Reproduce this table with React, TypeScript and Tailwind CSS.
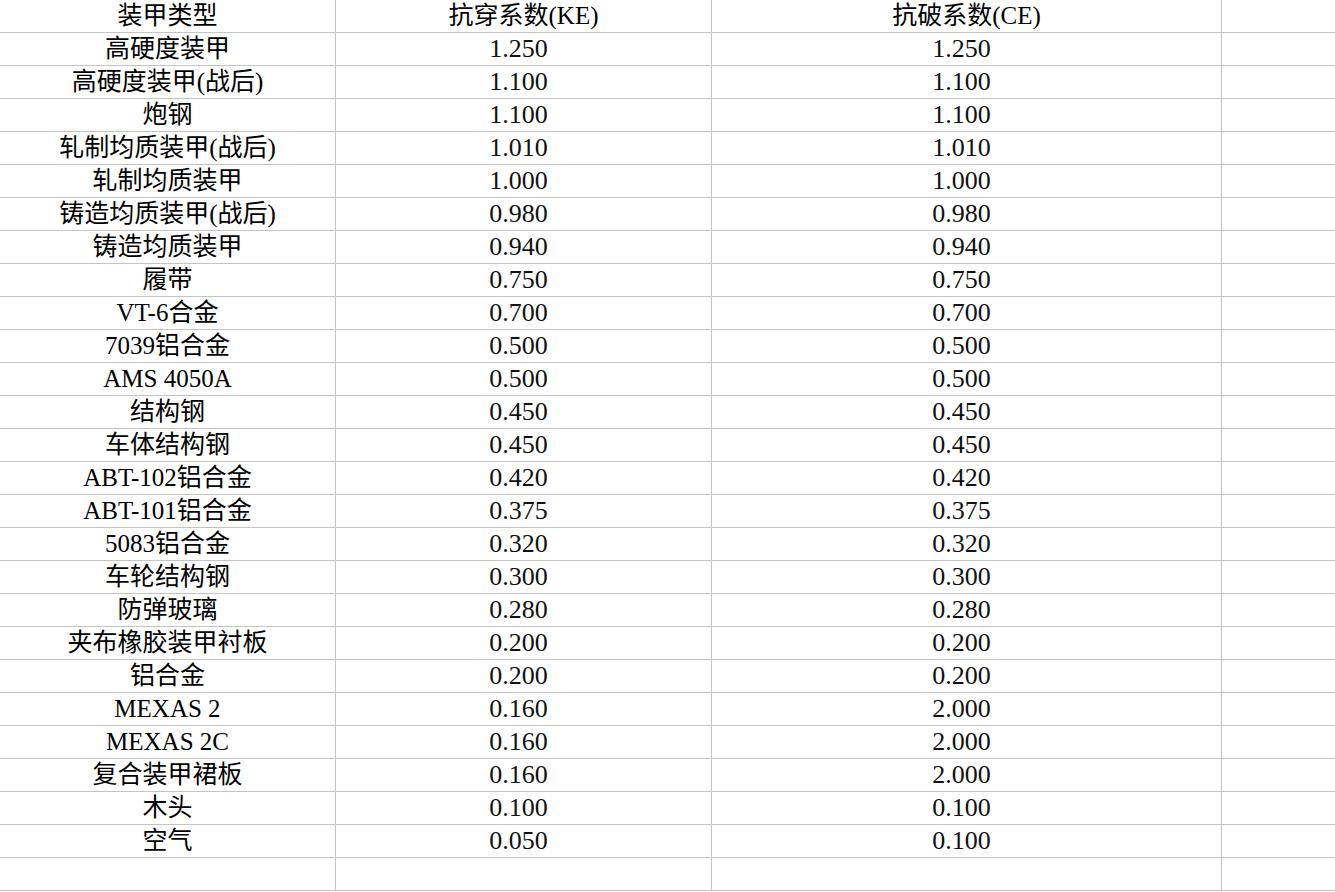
const rows: [string, string, string][] = [
  ["高硬度装甲", "1.250", "1.250"],
  ["高硬度装甲(战后)", "1.100", "1.100"],
  ["炮钢", "1.100", "1.100"],
  ["轧制均质装甲(战后)", "1.010", "1.010"],
  ["轧制均质装甲", "1.000", "1.000"],
  ["铸造均质装甲(战后)", "0.980", "0.980"],
  ["铸造均质装甲", "0.940", "0.940"],
  ["履带", "0.750", "0.750"],
  ["VT-6合金", "0.700", "0.700"],
  ["7039铝合金", "0.500", "0.500"],
  ["AMS 4050A", "0.500", "0.500"],
  ["结构钢", "0.450", "0.450"],
  ["车体结构钢", "0.450", "0.450"],
  ["ABT-102铝合金", "0.420", "0.420"],
  ["ABT-101铝合金", "0.375", "0.375"],
  ["5083铝合金", "0.320", "0.320"],
  ["车轮结构钢", "0.300", "0.300"],
  ["防弹玻璃", "0.280", "0.280"],
  ["夹布橡胶装甲衬板", "0.200", "0.200"],
  ["铝合金", "0.200", "0.200"],
  ["MEXAS 2", "0.160", "2.000"],
  ["MEXAS 2C", "0.160", "2.000"],
  ["复合装甲裙板", "0.160", "2.000"],
  ["木头", "0.100", "0.100"],
  ["空气", "0.050", "0.100"],
  ["", "", ""],
];

function Cell({ children, num }: { children?: React.ReactNode; num?: boolean }) {
  return (
    <div
      className={
        num
          ? "h-[33px] border-r border-b border-[#c4c4c4] flex items-center justify-center leading-[32px] whitespace-pre text-[#111] text-[26px] pr-[10px] overflow-hidden"
          : "h-[33px] border-r border-b border-[#c4c4c4] flex items-center justify-center leading-[32px] whitespace-pre text-black overflow-hidden"
      }
    >
      {children}
    </div>
  );
}

export default function App() {
  return (
    <div
      className="w-[1335px] h-[892px] bg-white overflow-hidden text-[25px]"
      style={{ fontFamily: '"Liberation Serif", "Noto Sans CJK SC", serif' }}
    >
      <div className="grid grid-cols-[336px_376px_510px_1fr]">
        <Cell>装甲类型</Cell>
        <Cell>抗穿系数(KE)</Cell>
        <Cell>抗破系数(CE)</Cell>
        <div className="h-[33px] border-b border-[#c4c4c4]" />
        {rows.map(([name, ke, ce], i) => (
          <div key={i} className="contents">
            <Cell>{name}</Cell>
            <Cell num>{ke}</Cell>
            <Cell num>{ce}</Cell>
            <div className="h-[33px] border-b border-[#c4c4c4]" />
          </div>
        ))}
      </div>
    </div>
  );
}
